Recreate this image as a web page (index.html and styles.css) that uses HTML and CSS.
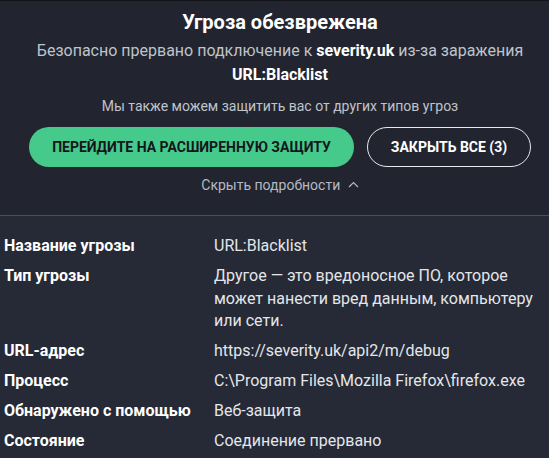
FILE: index.html
```html
<!DOCTYPE html>
<html lang="ru">
<head>
    <meta charset="UTF-8">
    <title>Угроза обезврежена</title>
    <link rel="stylesheet" href="styles.css">
</head>
<body>
<div class="panel">
    <div class="head">
        <h1>Угроза обезврежена</h1>
        <p class="lead">Безопасно прервано подключение к <b>severity.uk</b> из-за заражения</p>
        <p class="threat">URL:Blacklist</p>
        <p class="promo">Мы также можем защитить вас от других типов угроз</p>
        <div class="actions">
            <button class="btn btn-green">Перейдите на расширенную защиту</button>
            <button class="btn btn-outline">Закрыть все (3)</button>
        </div>
        <div class="toggle">Скрыть подробности
            <svg width="11" height="7" viewBox="0 0 11 7"><path d="M1 6 5.5 1.5 10 6" fill="none" stroke="currentColor" stroke-width="1.2"/></svg>
        </div>
    </div>
    <table class="details">
        <tr><th>Название угрозы</th><td>URL:Blacklist</td></tr>
        <tr><th>Тип угрозы</th><td>Другое — это вредоносное ПО, которое может нанести вред данным, компьютеру или сети.</td></tr>
        <tr><th>URL-адрес</th><td>https://severity.uk/api2/m/debug</td></tr>
        <tr><th>Процесс</th><td>C:\Program Files\Mozilla Firefox\firefox.exe</td></tr>
        <tr><th>Обнаружено с помощью</th><td>Веб-защита</td></tr>
        <tr><th>Состояние</th><td>Соединение прервано</td></tr>
    </table>
</div>
</body>
</html>
```

FILE: styles.css
```css
body { margin: 0; background: #252a36; font-family: Roboto, "Noto Sans", sans-serif; color: #fff; }
.panel { border-top: 1px solid #111317; }
.head { background: #22252f; text-align: center; padding: 7px 0 20px 11px; border-bottom: 1px solid #4a4f5c; }
h1 { margin: 0; font-size: 20px; font-weight: 700; line-height: 28px; }
.lead { margin: 3px 0 0; font-size: 16px; line-height: 24px; color: #bfc3cb; }
.lead b { color: #fff; }
.threat { margin: 0; font-size: 16px; line-height: 24px; font-weight: 700; }
.promo { margin: 9px 0 0; font-size: 14px; line-height: 20px; color: #bfc3cb; }
.actions { display: flex; justify-content: center; gap: 13px; margin-top: 11px; }
.btn { height: 40px; border-radius: 20px; font-family: inherit; font-size: 14px; font-weight: 700; text-transform: uppercase; cursor: pointer; }
.btn-green { width: 325px; background: #45ca8b; color: #14161b; border: none; }
.btn-outline { width: 164px; background: transparent; color: #fff; border: 1px solid #e8e9ec; }
.toggle { margin-top: 8px; font-size: 14px; line-height: 20px; color: #b4bac4; }
.toggle svg { margin-left: 4px; vertical-align: 2px; }
.details { border-collapse: collapse; margin: 19px 0 0 4px; font-size: 16px; line-height: 22.5px; }
.details th { text-align: left; vertical-align: top; width: 210px; padding: 0 0 7.5px; font-weight: 700; }
.details td { padding: 0 0 7.5px; color: #e4e6ea; width: 325px; }
```
